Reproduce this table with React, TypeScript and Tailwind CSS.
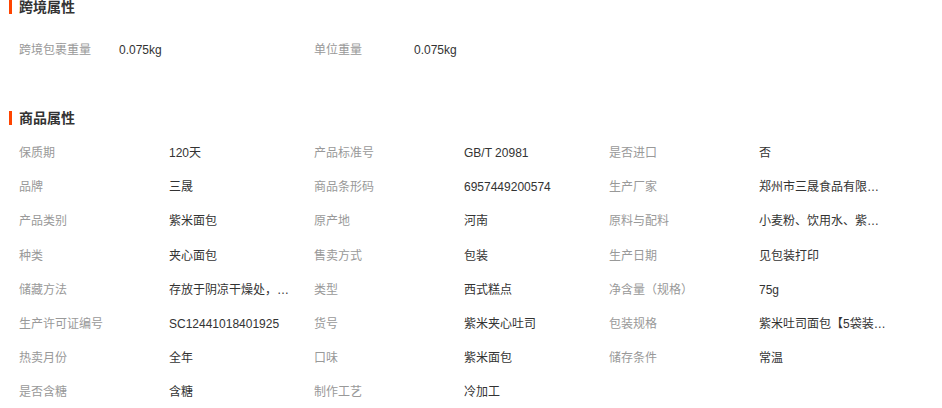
import React from "react";

const font = {
  fontFamily: '"Liberation Sans", "Noto Sans CJK SC", sans-serif',
};

const cross: [string, string][] = [
  ["跨境包裹重量", "0.075kg"],
  ["单位重量", "0.075kg"],
];

const attrs: [string, string][] = [
  ["保质期", "120天"],
  ["产品标准号", "GB/T 20981"],
  ["是否进口", "否"],
  ["品牌", "三晟"],
  ["商品条形码", "6957449200574"],
  ["生产厂家", "郑州市三晟食品有限公司"],
  ["产品类别", "紫米面包"],
  ["原产地", "河南"],
  ["原料与配料", "小麦粉、饮用水、紫米、白砂糖"],
  ["种类", "夹心面包"],
  ["售卖方式", "包装"],
  ["生产日期", "见包装打印"],
  ["储藏方法", "存放于阴凉干燥处，避免阳光直射"],
  ["类型", "西式糕点"],
  ["净含量（规格）", "75g"],
  ["生产许可证编号", "SC12441018401925"],
  ["货号", "紫米夹心吐司"],
  ["包装规格", "紫米吐司面包【5袋装】75g*5"],
  ["热卖月份", "全年"],
  ["口味", "紫米面包"],
  ["储存条件", "常温"],
  ["是否含糖", "含糖"],
  ["制作工艺", "冷加工"],
];

function Heading({ title }: { title: string }) {
  return (
    <div className="flex items-center h-[14px] pl-[9px]">
      <span className="w-[3px] h-[14px] bg-[#ff4400] mr-[7px]" />
      <span className="text-[14px] leading-[14px] font-bold text-[#333]">{title}</span>
    </div>
  );
}

export default function App() {
  return (
    <div className="w-[942px] h-[408px] bg-white overflow-hidden" style={font}>
      <Heading title="跨境属性" />
      <div className="mt-[19px] pl-[19px] flex h-[34px] items-center text-[12px]">
        {cross.map(([k, v]) => (
          <div key={k} className="flex w-[295px]">
            <span className="w-[100px] text-[#999]">{k}</span>
            <span className="text-[#333]">{v}</span>
          </div>
        ))}
      </div>
      <div className="mt-[44px]">
        <Heading title="商品属性" />
      </div>
      <div className="mt-[11px] pl-[19px] grid grid-cols-[295px_295px_295px] auto-rows-[34.2px] text-[12px]">
        {attrs.map(([k, v]) => (
          <div key={k} className="flex items-center">
            <span className="w-[150px] shrink-0 text-[#999]">{k}</span>
            <span className="w-[128px] truncate text-[#333]">{v}</span>
          </div>
        ))}
      </div>
    </div>
  );
}
